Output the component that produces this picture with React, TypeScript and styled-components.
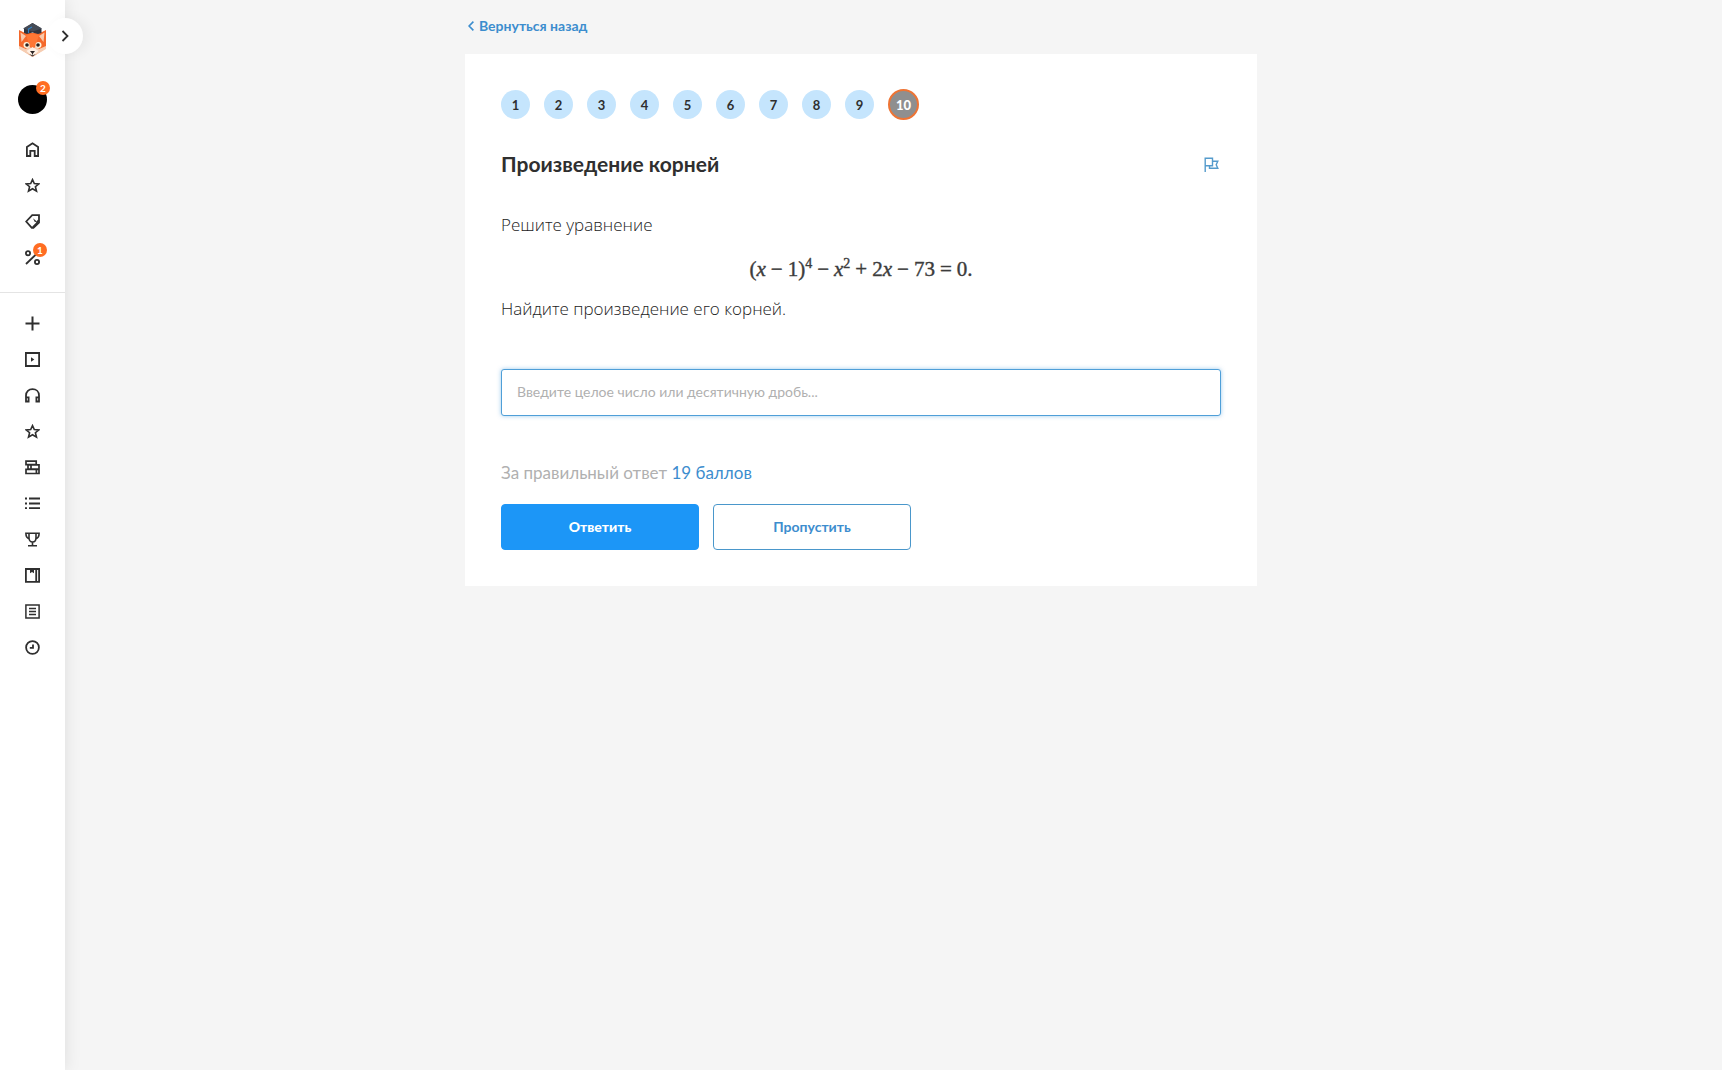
import React, { useState } from "react";
import styled, { createGlobalStyle, css } from "styled-components";

const ui = `Lato, "Noto Sans", sans-serif`;
const prose = `"Open Sans", "Noto Sans", sans-serif`;
const ink = "#2f2f2f";
const blue = "#3c8dce";
const orange = "#ff6d22";

const GlobalStyle = createGlobalStyle`
  *, *::before, *::after { box-sizing: border-box; }
  body { margin: 0; background: #f5f5f5; color: ${ink}; font-family: ${ui}; }
  button, input { font-family: inherit; }
`;

const Page = styled.div`
  display: grid;
  grid-template-columns: 65px minmax(0, 1fr) 65px;
  min-height: 100vh;
`;

const Sidebar = styled.aside`
  position: relative;
  background: #fff;
  box-shadow: 0 0 16px rgba(0, 0, 0, 0.1);
  display: flex;
  flex-direction: column;
  align-items: center;
  padding-top: 22px;
`;

const LogoLink = styled.a`
  display: block;
  height: 36px;
  margin-bottom: 27px;
  svg { display: block; }
`;

const Toggle = styled.button`
  position: absolute;
  top: 18px;
  right: -18px;
  width: 36px;
  height: 36px;
  padding: 0;
  border: 0;
  border-radius: 50%;
  background: #fff;
  box-shadow: 6px 0 12px rgba(0, 0, 0, 0.05);
  color: ${ink};
  display: flex;
  align-items: center;
  justify-content: center;
  cursor: pointer;
`;

const Avatar = styled.a`
  position: relative;
  width: 29px;
  height: 29px;
  margin-bottom: 17px;
  border-radius: 50%;
  background: #000;
`;

const Badge = styled.span`
  position: absolute;
  top: -4px;
  right: -3px;
  width: 14px;
  height: 14px;
  border-radius: 50%;
  background: ${orange};
  color: #fff;
  font-size: 10px;
  font-weight: 700;
  line-height: 14px;
  text-align: center;
`;

const Menu = styled.ul`
  list-style: none;
  width: 100%;
  margin: 0;
  padding: 0;
`;

const Divider = styled.hr`
  width: 100%;
  height: 1px;
  margin: 17px 0 12px;
  border: 0;
  background: #e4e4e4;
`;

const MenuLink = styled.a`
  display: flex;
  align-items: center;
  justify-content: center;
  height: 36px;
  color: ${ink};
`;

const IconBox = styled.span`
  position: relative;
  display: flex;
  width: 15px;
  height: 15px;
  ${Badge} { top: -7px; right: -7px; }
`;

const Main = styled.main`
  width: 100%;
  max-width: 792px;
  margin: 0 auto;
  padding: 16px 0 32px;
`;

const BackLink = styled.a`
  display: inline-flex;
  align-items: center;
  gap: 5px;
  margin: 0 0 18px 3px;
  color: ${blue};
  font-size: 14px;
  font-weight: 700;
  line-height: 20px;
  text-decoration: none;
  vertical-align: top;
`;

const Card = styled.section`
  padding: 35px 36px 36px;
  background: #fff;
`;

const Steps = styled.nav`
  display: flex;
  align-items: center;
  gap: 14px;
  margin-bottom: 28px;
`;

const Step = styled.button<{ $current?: boolean }>`
  width: 29px;
  height: 29px;
  padding: 0;
  border: 0;
  border-radius: 50%;
  background: #c5e5fd;
  color: ${ink};
  font-size: 13px;
  font-weight: 700;
  line-height: 28px;
  text-align: center;
  cursor: pointer;
  ${(p) =>
    p.$current &&
    css`
      width: 31px;
      height: 31px;
      border: 2px solid #ee7434;
      background: #8f8f8f;
      color: #fff;
      font-weight: 900;
      line-height: 26px;
    `}
`;

const TitleRow = styled.div`
  display: flex;
  align-items: center;
  justify-content: space-between;
  margin-bottom: 33px;
`;

const Title = styled.h1`
  margin: 0;
  font-size: 21px;
  font-weight: 700;
  line-height: 32px;
`;

const FlagButton = styled.button`
  display: flex;
  padding: 0 2px;
  border: 0;
  background: none;
  color: #559bcc;
  cursor: pointer;
`;

const Statement = styled.div`
  margin-bottom: 48px;
  font-family: ${prose};
  font-size: 17px;
  font-weight: 300;
  line-height: 24px;
  color: #222;
  p { margin: 0; }
`;

const Formula = styled.div`
  display: flex;
  justify-content: center;
  margin: 20px 0 16px;
  font-family: "Liberation Serif", "Times New Roman", serif;
  font-size: 21px;
  font-weight: 400;
  line-height: 24px;
  color: #3c3c3c;
  white-space: nowrap;
  -webkit-text-stroke: 0.4px currentColor;
  sup { font-size: 14px; line-height: 0; }
`;

const Op = styled.span`
  margin: 0 5px;
`;

const Answer = styled.input`
  display: block;
  width: 100%;
  height: 47px;
  margin-bottom: 45px;
  padding: 0 15px 2px;
  border: 1px solid #4f9fd8;
  border-radius: 3px;
  outline: 0;
  box-shadow: 0 0 4px rgba(60, 150, 220, 0.5);
  color: ${ink};
  font-size: 14px;
  &::placeholder { color: #b0b0b0; opacity: 1; }
`;

const Reward = styled.p`
  margin: 0 0 19px;
  color: #b0b0b0;
  font-size: 17px;
  line-height: 24px;
  strong { color: ${blue}; font-weight: 400; }
`;

const Actions = styled.div`
  display: flex;
  gap: 14px;
`;

const Action = styled.button<{ $primary?: boolean }>`
  width: 198px;
  height: 46px;
  padding: 0 0 2px;
  border: 1px solid ${(p) => (p.$primary ? "#1c96f7" : "#4a97cb")};
  border-radius: 4px;
  background: ${(p) => (p.$primary ? "#1c96f7" : "#fff")};
  color: ${(p) => (p.$primary ? "#fff" : blue)};
  font-size: 14px;
  font-weight: ${(p) => (p.$primary ? 900 : 700)};
  cursor: pointer;
`;

const Glyph = ({ children }: { children: React.ReactNode }) => (
  <svg width="15" height="15" viewBox="0 0 15 15" fill="none" stroke="currentColor" strokeWidth="1.8" aria-hidden="true">
    {children}
  </svg>
);

const star = <path d="M7.5 1.6l1.8 3.9 4.500.4-3.400 2.800 1.100 4.500-4-2.400-4 2.400 1.100-4.500-3.400-2.800 4.500-.4z" strokeWidth="1.600" />;

const icons: Record<string, React.ReactNode> = {
  home: <path d="M1.9 14V5L7.5 1.300 13.100 5v9H9.700V8.800H5.300V14z" />,
  star,
  tag: (
    <>
      <path d="M1.200 7.500L7.200 1.200h6.800v7.400L8.400 13.900H6.800z" />
      <path d="M13.600 6.200c-1.200 2.900-3 5-6 7.200" />
      <path d="M8 4.200l4.200 3.500-2.400.3z" fill="currentColor" stroke="none" />
    </>
  ),
  percent: (
    <>
      <circle cx="3" cy="3.200" r="2.100" />
      <circle cx="12" cy="12" r="2.100" />
      <path d="M1 14L13.500 2" />
    </>
  ),
  plus: <path d="M7.500.5v14M.5 7.500h14" strokeWidth="2" />,
  video: (
    <>
      <path d="M.9 1h13.200v13H.9z" />
      <path d="M6 5.300l3.300 2.200L6 9.700z" fill="currentColor" stroke="none" />
    </>
  ),
  audio: (
    <path d="M1 13.200V7.400C1 3.600 3.800 1.100 7.500 1.100S14 3.600 14 7.400v5.800M1 9.300h2.600v4.200H1zM14 9.300h-2.600v4.200H14z" />
  ),
  books: (
    <path d="M1 1.200h10.200v3.500H1zM3 4.900h11v4.200H3zM6 5v4M1 9.300h13v4.200H1zM11.400 9.500v4" strokeWidth="1.700" />
  ),
  list: <path d="M4 2.500h11M4 7.500h11M4 12.200h11M0 2.500h2M0 7.500h2M0 12.200h2" />,
  cup: (
    <path d="M4 1.300h7v4.400C11 8.200 9.600 10 7.500 10S4 8.200 4 5.700zM4 1.300H.9c0 3 .9 5 3.400 5.400M11 1.300h3.100c0 3-.9 5-3.400 5.400M7.500 10v3.600M3 13.800h9" strokeWidth="1.600" />
  ),
  book: (
    <>
      <path d="M.9 1h13.200v12.800H.9zM11.200 1v12.800" />
      <path d="M5 1h4v4.200L7 4 5 5.200z" fill="currentColor" stroke="none" />
    </>
  ),
  notes: <path d="M.9 1h13.200v13H.9zM4 4.600h7M4 7.500h7M4 10.400h7" strokeWidth="1.500" />,
  clock: (
    <>
      <circle cx="7.500" cy="7.500" r="6.400" />
      <path d="M8 4.600v3.300H4.800" />
    </>
  ),
};

const Fox = () => (
  <svg width="29" height="36" viewBox="0 0 29 36" aria-hidden="true">
    <path d="M1 8l6 3h15l6-3v18L14.500 35 1 26z" fill="#f4682a" />
    <path d="M2.500 10.500l5.500 3.500-4.500 6zM26.500 10.500L21 14l4.500 6z" fill="#f9c9ab" />
    <path d="M8 13l6.500-1.500L21 13l-3 9-3.500 5L11 22z" fill="#ff7734" />
    <path d="M1 24l7 3 3-4 3.500 6 3.500-6 3 4 7-3v3L14.500 35 1 27z" fill="#f6cdb2" />
    <path d="M8.500 29l6-4 6 4-6 5.500z" fill="#fff0e4" />
    <circle cx="8.500" cy="23" r="3" fill="#fff4dc" />
    <circle cx="20.500" cy="23" r="3" fill="#fff4dc" />
    <circle cx="9" cy="23" r="1.800" fill="#29211e" />
    <circle cx="20" cy="23" r="1.800" fill="#29211e" />
    <path d="M12 29h5l-2 2.500h-1zM14 31h1v1.500h-1zM11 32l3.500 1.200L18 32l-3.500 2.600z" fill="#2b2424" />
    <path d="M14.500 1L23.500 6.500v4.500L20 12l-5.500-1.500L9 12l-3-1V6.500z" fill="#30353f" />
    <path d="M14.500 1L24 6.500l-9.500 3L5 6.500z" fill="#454b56" />
    <path d="M14 5L10.500 7v4" fill="none" stroke="#2f7fc4" strokeWidth="1.200" />
  </svg>
);

type Entry = { icon: string; label: string; badge?: number };

const personal: Entry[] = [
  { icon: "home", label: "Главная" },
  { icon: "star", label: "Избранное" },
  { icon: "tag", label: "Купоны" },
  { icon: "percent", label: "Скидки", badge: 1 },
];

const learning: Entry[] = [
  { icon: "plus", label: "Добавить" },
  { icon: "video", label: "Видео" },
  { icon: "audio", label: "Аудио" },
  { icon: "star", label: "Курсы" },
  { icon: "books", label: "Библиотека" },
  { icon: "list", label: "Список" },
  { icon: "cup", label: "Олимпиады" },
  { icon: "book", label: "Учебник" },
  { icon: "notes", label: "Конспекты" },
  { icon: "clock", label: "История" },
];

const MenuGroup = ({ entries }: { entries: Entry[] }) => (
  <Menu>
    {entries.map((e) => (
      <li key={e.label}>
        <MenuLink href="#" aria-label={e.label}>
          <IconBox>
            <Glyph>{icons[e.icon]}</Glyph>
            {e.badge && <Badge>{e.badge}</Badge>}
          </IconBox>
        </MenuLink>
      </li>
    ))}
  </Menu>
);

export default function App() {
  const [answer, setAnswer] = useState("");
  return (
    <>
      <GlobalStyle />
      <Page>
        <Sidebar>
          <LogoLink href="#" aria-label="На главную">
            <Fox />
          </LogoLink>
          <Toggle type="button" aria-label="Развернуть меню">
            <svg width="8" height="12" viewBox="0 0 8 12" fill="none" stroke="currentColor" strokeWidth="1.8" aria-hidden="true">
              <path d="M1.500 1l5 5-5 5" />
            </svg>
          </Toggle>
          <Avatar href="#" aria-label="Профиль">
            <Badge>2</Badge>
          </Avatar>
          <MenuGroup entries={personal} />
          <Divider />
          <MenuGroup entries={learning} />
        </Sidebar>
        <Main>
          <BackLink href="#">
            <svg width="6" height="10" viewBox="0 0 6 10" fill="none" stroke="currentColor" strokeWidth="1.600" aria-hidden="true">
              <path d="M5.400.6L1.100 5l4.300 4.400" />
            </svg>
            Вернуться назад
          </BackLink>
          <Card>
            <Steps aria-label="Задачи">
              {Array.from({ length: 10 }, (_, i) => (
                <Step key={i} type="button" $current={i === 9} aria-current={i === 9 ? "step" : undefined}>
                  {i + 1}
                </Step>
              ))}
            </Steps>
            <TitleRow>
              <Title>Произведение корней</Title>
              <FlagButton type="button" aria-label="Сообщить об ошибке">
                <svg width="15" height="15" viewBox="0 0 15 15" fill="none" stroke="currentColor" strokeWidth="1.400" aria-hidden="true">
                  <path d="M1.200 15V1.200h7.300v7.600H1.200M8.500 4.200h5.300l-1.600 3.500 1.600 3.500H5.500V8.800" />
                </svg>
              </FlagButton>
            </TitleRow>
            <Statement>
              <p>Решите уравнение</p>
              <Formula>
                <span>(<i>x</i></span>
                <Op>−</Op>
                <span>1)<sup>4</sup></span>
                <Op>−</Op>
                <span><i>x</i><sup>2</sup></span>
                <Op>+</Op>
                <span>2<i>x</i></span>
                <Op>−</Op>
                <span>73</span>
                <Op>=</Op>
                <span>0.</span>
              </Formula>
              <p>Найдите произведение его корней.</p>
            </Statement>
            <Answer
              type="text"
              aria-label="Ответ"
              placeholder="Введите целое число или десятичную дробь..."
              value={answer}
              onChange={(e) => setAnswer(e.target.value)}
            />
            <Reward>
              За правильный ответ <strong>19 баллов</strong>
            </Reward>
            <Actions>
              <Action type="submit" $primary>Ответить</Action>
              <Action type="button">Пропустить</Action>
            </Actions>
          </Card>
        </Main>
      </Page>
    </>
  );
}
